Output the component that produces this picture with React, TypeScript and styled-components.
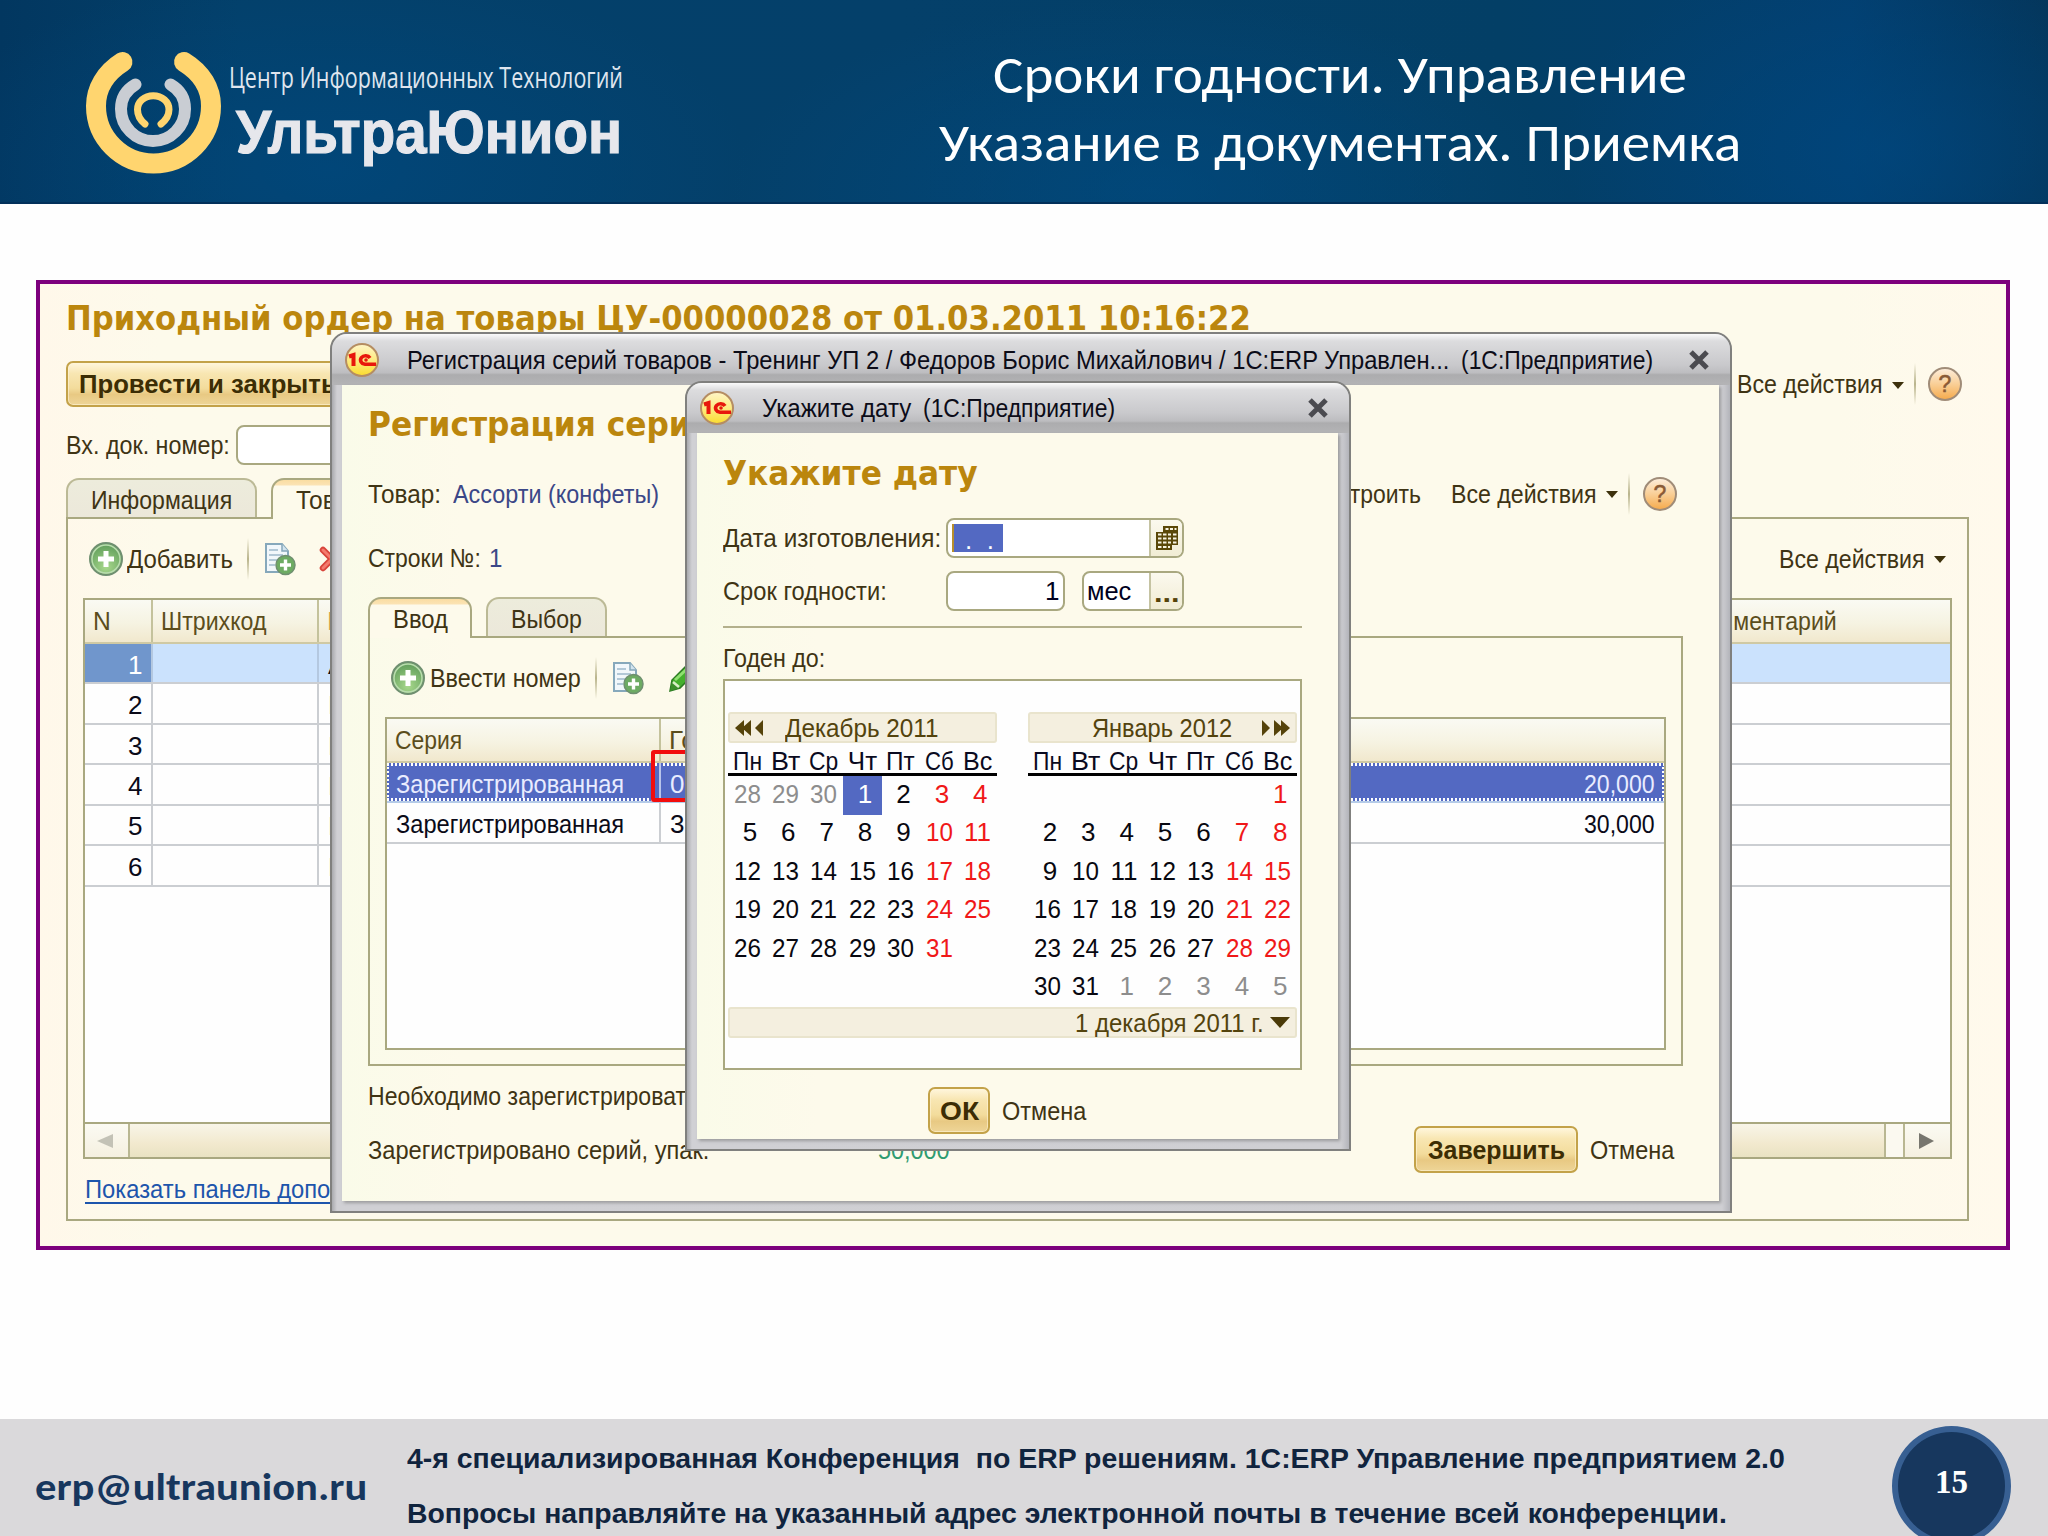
import React, { useLayoutEffect, useRef, useState } from 'react';
import styled, { createGlobalStyle } from 'styled-components';

const Global = createGlobalStyle`
  *, *::before, *::after { box-sizing: border-box; }
  html, body { margin: 0; padding: 0; }
  body { width: 2048px; height: 1536px; overflow: hidden; background: #fefefe; }
`;

const OLIVE = '#a9a880';
const INK = '#3f3414';
const UI = '"Liberation Sans", Arial, sans-serif';
const HEAD = '"DejaVu Sans", Verdana, sans-serif';
const DISPLAY = 'Carlito, Calibri, Lato, "Open Sans", sans-serif';

/* ---------- text that is set to an exact measure ---------- */

const Measure = styled.span<{ $w: number }>`
  display: inline-block;
  flex: none;
  width: ${(p) => p.$w}px;
  white-space: pre;
  text-align: left;
`;
const MeasureInner = styled.span`
  display: inline-block;
  transform-origin: 0 50%;
`;

function Fit({ w, children }: { w: number; children: React.ReactNode }) {
  const ref = useRef<HTMLSpanElement>(null);
  const [scale, setScale] = useState(1);
  useLayoutEffect(() => {
    if (ref.current) setScale(w / ref.current.offsetWidth);
  }, [w, children]);
  return (
    <Measure $w={w}>
      <MeasureInner ref={ref} style={{ transform: `scaleX(${scale})` }}>
        {children}
      </MeasureInner>
    </Measure>
  );
}

/* ---------- slide ---------- */

const Slide = styled.div`
  width: 2048px;
  height: 1536px;
  display: flex;
  flex-direction: column;
  background: #fefefe;
  font-family: ${UI};
  overflow: hidden;
`;

const Header = styled.header`
  height: 204px;
  flex: none;
  display: flex;
  background:
    radial-gradient(ellipse 420px 190px at 1150px 190px, rgba(0, 76, 132, 0.6), transparent),
    radial-gradient(ellipse 330px 200px at 1890px 150px, rgba(0, 73, 130, 0.6), transparent),
    radial-gradient(ellipse 420px 200px at 330px 170px, rgba(0, 74, 130, 0.6), transparent),
    linear-gradient(90deg, #023760 0, #03406a 240px, #04406a 900px, #033f66 1500px, #023f70 1850px, #043559 2048px);
  border-bottom: 2px solid #02305a;
`;
const LogoSvg = styled.svg`
  flex: none;
  width: 640px;
  height: 201px;
  overflow: visible;
`;
const Titles = styled.div`
  display: flex;
  flex-direction: column;
  align-items: center;
  width: 1400px;
  padding-top: 41px;
  color: #fff;
  font: 400 53px/68px ${DISPLAY};
`;

const Stage = styled.main`
  flex: 1;
  padding: 76px 38px 0 36px;
`;

const Frame = styled.section`
  position: relative;
  width: 1974px;
  height: 970px;
  border: 4px solid #7d007d;
  background: linear-gradient(90deg, #fff8ea 0, #fdfaeb 120px, #fdfaeb 1800px, #fff9ec 100%);
  padding-left: 26px;
  color: ${INK};
  font-size: 26px;
  line-height: 32px;
`;

const Heading = styled.h2<{ $h: number; $pt?: number }>`
  margin: 0;
  height: ${(p) => p.$h}px;
  padding-top: ${(p) => p.$pt ?? 0}px;
  display: flex;
  align-items: center;
  font: 700 33px/40px ${HEAD};
  color: #bb860d;
`;

const Row = styled.div<{ $h: number; $mt?: number; $gap?: number }>`
  display: flex;
  align-items: center;
  height: ${(p) => p.$h}px;
  margin-top: ${(p) => p.$mt ?? 0}px;
  gap: ${(p) => p.$gap ?? 0}px;
`;
const Grow = styled.div`
  flex: 1;
`;
const Gap = styled.div<{ $w: number }>`
  flex: none;
  width: ${(p) => p.$w}px;
`;
const Value = styled.span<{ $c?: string }>`
  color: ${(p) => p.$c ?? '#3b4787'};
`;
const Ellipsis = styled.span`
  padding-top: 3px;
  color: #55430a;
  font-weight: 700;
`;

const GoldButton = styled.button<{ $w: number; $h?: number; $pl?: number }>`
  flex: none;
  width: ${(p) => p.$w}px;
  height: ${(p) => p.$h ?? 47}px;
  padding: 0 0 0 ${(p) => p.$pl ?? 12}px;
  text-align: left;
  border: 2px solid #c3a249;
  border-radius: 7px;
  background: linear-gradient(#fff6dc 0, #f8e6b2 25%, #f3dc9c 60%, #e8c983 75%, #eed597 100%);
  box-shadow: inset 0 0 0 1px rgba(255, 245, 215, 0.6);
  font: 700 26px/32px ${UI};
  color: #3c2d04;
`;

const Separator = styled.i`
  flex: none;
  width: 2px;
  height: 42px;
  background: linear-gradient(transparent, #b9b48c, transparent);
`;
const Caret = styled.i`
  flex: none;
  margin-top: 2px;
  border: 6px solid transparent;
  border-top: 7px solid #3d310c;
  border-bottom: 0;
`;

const Field = styled.div<{ $w: number }>`
  flex: none;
  display: flex;
  align-items: center;
  width: ${(p) => p.$w}px;
  height: 40px;
  border: 2px solid ${OLIVE};
  border-radius: 8px;
  background: #fff;
  overflow: hidden;
  color: #000020;
`;
const FieldButton = styled.div`
  width: 33px;
  height: 100%;
  border-left: 2px solid #c5c3a2;
  background: linear-gradient(#fbf9ee, #f1ecd4);
  display: flex;
  align-items: center;
  justify-content: center;
`;
const Selection = styled.span`
  display: flex;
  align-items: center;
  margin-left: 4px;
  width: 51px;
  height: 28px;
  padding: 4px 0 0 11px;
  background: #5369c2;
  border-left: 2px solid #b78f2c;
  color: #fff;
  white-space: pre;
  line-height: 20px;
`;

const Tabs = styled.div<{ $mt: number }>`
  display: flex;
  gap: 14px;
  margin-top: ${(p) => p.$mt}px;
  height: 39px;
`;
const Tab = styled.div<{ $w: number; $on?: boolean }>`
  position: relative;
  z-index: 1;
  display: flex;
  align-items: center;
  padding-left: 23px;
  width: ${(p) => p.$w}px;
  height: ${(p) => (p.$on ? 41 : 39)}px;
  padding-top: ${(p) => (p.$on ? 0 : 2)}px;
  border: 2px solid ${(p) => (p.$on ? OLIVE : '#bbb995')};
  border-bottom: 0;
  border-radius: 13px 13px 0 0;
  background: ${(p) =>
    p.$on ? 'linear-gradient(#fadda2 0, #fbe3b4 5px, #fdfaeb 6px)' : 'linear-gradient(#edecdc, #ece8da)'};
`;
const Panel = styled.div<{ $w: number; $h: number }>`
  width: ${(p) => p.$w}px;
  height: ${(p) => p.$h}px;
  border: 2px solid ${OLIVE};
  padding: 0 15px;
`;

/* ---------- tables ---------- */

const Grid = styled.div<{ $h: number }>`
  display: flex;
  flex-direction: column;
  height: ${(p) => p.$h}px;
  border: 2px solid ${OLIVE};
  background: #fefefe;
  color: #0a0a18;
`;
const GridHead = styled.div<{ $cols: string }>`
  display: grid;
  grid-template-columns: ${(p) => p.$cols};
  height: 44px;
  flex: none;
  background: linear-gradient(#fafaf3, #f6f3e2 55%, #f1e8cd);
  border-bottom: 2px solid #cfc9a4;
  color: #5b4d1c;
`;
const Cell = styled.div<{ $pl?: number; $end?: boolean; $bg?: string; $c?: string; $line?: string }>`
  display: flex;
  align-items: center;
  min-width: 0;
  overflow: hidden;
  padding-left: ${(p) => p.$pl ?? 0}px;
  padding-right: ${(p) => (p.$end ? 9 : 0)}px;
  justify-content: ${(p) => (p.$end ? 'flex-end' : 'flex-start')};
  background: ${(p) => p.$bg ?? 'transparent'};
  color: ${(p) => p.$c ?? 'inherit'};
  border-right: ${(p) => (p.$line ? `2px solid ${p.$line}` : '0')};
`;
const GridRow = styled.div<{ $cols: string; $active?: boolean }>`
  display: grid;
  grid-template-columns: ${(p) => p.$cols};
  height: 40.45px;
  flex: none;
  background: ${(p) => (p.$active ? '#cbe2fd' : '#fefefe')};
  border-bottom: 2px solid #cbced2;
  ${Cell} {
    padding-top: 3px;
  }
`;
const DottedRow = styled(GridRow)`
  color: #e9ecff;
  border-bottom-color: #b5cbe8;
  background:
    repeating-linear-gradient(90deg, #fff 0 2px, #5369c2 2px 4px) 0 0 / 100% 3px no-repeat,
    repeating-linear-gradient(90deg, #fff 0 2px, #5369c2 2px 4px) 0 100% / 100% 3px no-repeat,
    repeating-linear-gradient(#fff 0 2px, #5369c2 2px 4px) 0 0 / 2px 100% no-repeat,
    repeating-linear-gradient(#fff 0 2px, #5369c2 2px 4px) 100% 0 / 2px 100% no-repeat,
    #5369c2;
`;
const RedMark = styled.div`
  position: absolute;
  left: 266px;
  top: 33px;
  width: 60px;
  height: 52px;
  border: 4px solid #f20d0d;
  border-radius: 3px;
`;
const Relative = styled.div`
  position: relative;
`;

const Scrollbar = styled.div`
  margin-top: auto;
  height: 35px;
  display: grid;
  grid-template-columns: 43px 1758px 1fr 45px;
  border-top: 2px solid ${OLIVE};
  background: #fbf9f0;
`;
const ScrollButton = styled.div`
  display: flex;
  align-items: center;
  justify-content: center;
  padding-right: 4px;
  background: linear-gradient(#fbfaf2, #f5f0e0);
`;
const Thumb = styled.div`
  border: solid #b9b792;
  border-width: 0 2px;
  background: linear-gradient(#f8f5e8, #f2e9ce 60%, #e9e2c2);
`;
const Track = styled.div`
  border-right: 2px solid #b9b792;
`;
const Link = styled.span`
  color: #1d55ac;
  border-bottom: 2px solid #1d55ac;
  height: 31px;
  line-height: 32px;
`;

/* ---------- floating windows ---------- */

const Win = styled.section<{ $x: number; $y: number; $w: number; $h: number }>`
  position: absolute;
  z-index: 3;
  left: ${(p) => p.$x}px;
  top: ${(p) => p.$y}px;
  width: ${(p) => p.$w}px;
  height: ${(p) => p.$h}px;
  border: 2px solid #80807e;
  border-radius: 17px 17px 0 0;
  background: linear-gradient(90deg, #a9aaae 0, #d0d0d4 5px, #cfcfd3 calc(100% - 8px), #b3b4ba 100%);
  padding: 0 11px 10px 10px;
  display: flex;
  flex-direction: column;
`;
const TitleBar = styled.div<{ $h: number }>`
  height: ${(p) => p.$h}px;
  flex: none;
  margin: 0 -11px 0 -10px;
  padding: 0 20px 0 12px;
  border-radius: 15px 15px 0 0;
  background: linear-gradient(#fafafa 0, #dcdcde 14%, #c9c9cc 60%, #bdbdc0 76%, #acacae 80%, #b4b4b6 100%);
  display: flex;
  align-items: center;
  color: #0c0c18;
`;
const Body = styled.div`
  flex: 1;
  padding-left: 26px;
  background: linear-gradient(90deg, #fafbe9 0, #fdfaeb 120px, #fdfaeb 100%);
  box-shadow: 2px 2px 3px rgba(90, 90, 90, 0.45);
`;

/* ---------- calendar ---------- */

const Divider = styled.div`
  margin-top: 15px;
  width: 579px;
  height: 2px;
  background: #b3b08c;
`;
const Calendar = styled.div`
  width: 579px;
  height: 391px;
  border: 2px solid ${OLIVE};
  background: #fefefe;
  padding: 31px 3px 0;
`;
const Months = styled.div`
  display: flex;
  justify-content: space-between;
`;
const Month = styled.div`
  width: 269px;
`;
const MonthBar = styled.div<{ $next?: boolean }>`
  display: flex;
  align-items: center;
  height: 31px;
  padding: 0 ${(p) => (p.$next ? 4 : 0)}px 0 ${(p) => (p.$next ? 62 : 5)}px;
  gap: ${(p) => (p.$next ? 29 : 21)}px;
  background: #f4efdf;
  border: 2px solid #e9e4cd;
  border-radius: 3px;
  color: #53430d;
`;
const Week = styled.div`
  display: grid;
  grid-template-columns: repeat(7, 38.4px);
  height: 33px;
  align-items: center;
  justify-items: center;
  padding-top: 2px;
  border-bottom: 3px solid #000;
  color: #0a0a20;
`;
const Days = styled.div`
  display: grid;
  grid-template-columns: repeat(7, 38.4px);
  grid-auto-rows: 38.5px;
`;
const Day = styled.div<{ $kind: string; $one: boolean }>`
  display: flex;
  align-items: center;
  justify-content: center;
  padding: 0 0 3px ${(p) => (p.$one ? 5 : 0)}px;
  color: ${(p) => ({ dim: '#8d8d8d', red: '#f01818', sel: '#fff', day: '#080810' })[p.$kind]};
  background: ${(p) => (p.$kind === 'sel' ? '#5369c2' : 'transparent')};
`;
const TodayBar = styled.div`
  display: flex;
  align-items: center;
  justify-content: flex-end;
  gap: 6px;
  height: 31px;
  padding-right: 5px;
  background: #f4efdf;
  border: 2px solid #e9e4cd;
  border-radius: 3px;
  color: #53430d;
`;
const BigCaret = styled.i`
  border: 10px solid transparent;
  border-top: 11px solid #4a3a08;
  border-bottom: 0;
`;
const Actions = styled.div`
  display: flex;
  align-items: center;
  gap: 12px;
  margin-top: 17px;
  padding-left: 205px;
`;

/* ---------- footer ---------- */

const Footer = styled.footer`
  position: relative;
  flex: none;
  height: 117px;
  display: flex;
  background: #dad9db;
`;
const Mail = styled.div`
  width: 407px;
  padding: 43px 0 0 35px;
  color: #17375e;
  font: 700 39px/50px ${DISPLAY};
`;
const Notes = styled.div`
  display: flex;
  flex-direction: column;
  padding-top: 12px;
  color: #10243e;
  font: 700 28px/55px ${UI};
`;
const PageNo = styled.div`
  position: absolute;
  left: 1892px;
  top: 7px;
  width: 119px;
  height: 120px;
  border-radius: 50%;
  border: 6px solid #375f92;
  background: #17375e;
  color: #fff;
  text-align: center;
  font: 700 33px/101px "Liberation Serif", serif;
`;

/* ---------- drawings ---------- */

const Icon = styled.svg`
  flex: none;
  display: block;
`;

const PlusIcon = () => (
  <Icon width="34" height="34" viewBox="0 0 34 34">
    <defs>
      <radialGradient id="plus" cx="50%" cy="75%" r="75%">
        <stop offset="0" stopColor="#a8d88c" />
        <stop offset="1" stopColor="#5c9a58" />
      </radialGradient>
    </defs>
    <circle cx="17" cy="17" r="16" fill="url(#plus)" stroke="#6f8f70" strokeWidth="2" />
    <circle cx="17" cy="17" r="14" fill="none" stroke="#b9dcae" strokeWidth="1.5" />
    <path d="M17 9v16M9 17h16" stroke="#fff" strokeWidth="5" />
  </Icon>
);
const CopyIcon = () => (
  <Icon width="33" height="34" viewBox="0 0 33 34">
    <path d="M2 2h16l6 7v21H2z" fill="#f1f7fb" stroke="#86a8bb" strokeWidth="2" />
    <path d="M18 2v7h6" fill="#d3e4ee" stroke="#86a8bb" strokeWidth="1.5" />
    <path d="M5 8h9M5 13h14M5 18h9M5 23h6" stroke="#9db9cb" strokeWidth="1.6" />
    <circle cx="21.5" cy="23" r="9.5" fill="#6dab63" stroke="#6f8f70" strokeWidth="1.5" />
    <path d="M21.5 17.5v11M16 23h11" stroke="#fff" strokeWidth="3.4" />
  </Icon>
);
const CrossIcon = () => (
  <Icon width="26" height="26" viewBox="0 0 26 26">
    <path d="M4 4l18 18M22 4L4 22" stroke="#d8433a" strokeWidth="6.5" strokeLinecap="round" />
    <path d="M4 4l18 18M22 4L4 22" stroke="#f47b6e" strokeWidth="3" strokeLinecap="round" />
  </Icon>
);
const PencilIcon = () => (
  <Icon width="30" height="30" viewBox="0 0 30 30">
    <path d="M2 28l2-11L19 2l8 8L12 25z" fill="#45b02d" stroke="#2c7a22" strokeWidth="1.5" />
    <path d="M7 17L20 5" stroke="#8fe070" strokeWidth="3" />
    <path d="M2 28l2-10 8 7z" fill="#3c8f2c" />
    <path d="M5 19l6 5" stroke="#d9f0c8" strokeWidth="2.5" />
  </Icon>
);
const HelpIcon = () => (
  <Icon width="36" height="36" viewBox="0 0 36 36">
    <defs>
      <linearGradient id="help" x1="0" y1="0" x2="0" y2="1">
        <stop offset="0" stopColor="#fdeedd" />
        <stop offset=".5" stopColor="#f9cf97" />
        <stop offset="1" stopColor="#f5a94a" />
      </linearGradient>
    </defs>
    <circle cx="18" cy="18" r="16" fill="url(#help)" stroke="#a08c78" strokeWidth="2" />
    <text x="18" y="26" textAnchor="middle" fontFamily="Liberation Sans" fontSize="23" stroke="#8a5a36" strokeWidth=".5" fill="#8a5a36">
      ?
    </text>
  </Icon>
);
const OneCIcon = () => (
  <Icon width="36" height="36" viewBox="0 0 36 36">
    <defs>
      <linearGradient id="onec" x1="0" y1="0" x2="0" y2="1">
        <stop offset="0" stopColor="#fff6c8" />
        <stop offset=".6" stopColor="#fde873" />
        <stop offset="1" stopColor="#fbdc2c" />
      </linearGradient>
    </defs>
    <circle cx="18" cy="18" r="16" fill="url(#onec)" stroke="#b58d62" strokeWidth="2" />
    <path d="M5 14.500l4.500-1.500v11" fill="none" stroke="#e8170c" strokeWidth="4" />
    <path d="M26 16a5 4.300 0 1 0-5 6.300H32" fill="none" stroke="#e8170c" strokeWidth="3.600" />
    <circle cx="22" cy="18" r="1.800" fill="#e8170c" />
  </Icon>
);
const CloseIcon = () => (
  <Icon width="22" height="22" viewBox="0 0 22 22">
    <path d="M3 3l16 16M19 3L3 19" stroke="#4b4b50" strokeWidth="5" />
  </Icon>
);
const SheetIcon = () => (
  <Icon width="24" height="26" viewBox="0 0 24 26">
    <path d="M8 1h15v19h-6v5H1V7h7z" fill="#5a4708" />
    <path
      d="M10.5 4h3M15 4h3M19.500 4h2M3 9.500h3.500M8 9.500h3.500M13 9.500h3M18 9.500h3.500M3 13.500h3.500M8 13.500h3.500M13 13.500h3M18 13.500h3.500M3 17.500h3.500M8 17.500h3.500M13 17.500h3M18 17.500h3.500M3 22h3.500M8 22h3.500M13 22h2"
      stroke="#f8f4e2"
      strokeWidth="2"
    />
  </Icon>
);
const PrevArrows = () => (
  <Icon width="29" height="16" viewBox="0 0 29 16">
    <path d="M9 0v16L0 8zM16 0v16L7 8zM28 0v16L20 8z" fill="#55430a" />
  </Icon>
);
const NextArrows = () => (
  <Icon width="29" height="16" viewBox="0 0 29 16">
    <path d="M20 0v16l9-8zM13 0v16l9-8zM1 0v16l8-8z" fill="#55430a" />
  </Icon>
);
const ScrollArrow = ({ left }: { left?: boolean }) => (
  <Icon width="16" height="16" viewBox="0 0 16 16">
    <path d={left ? 'M16 1v14L0 8z' : 'M1 0v16l15-8z'} fill={left ? '#c3c2b6' : '#77766e'} />
  </Icon>
);

const Logo = () => (
  <LogoSvg viewBox="0 0 640 201">
    <g fill="none" strokeLinecap="round">
      <path
        d="M122.500 62C105 73 96 89 96 106A57.500 57.500 0 0 0 211 106C211 89 202 73 184 62"
        stroke="#ffd56f"
        strokeWidth="20"
      />
      <path d="M135.500 84.500C126 90 121 99 121 109A32 32 0 0 0 185 109C185 99 180 90 170.500 84.500" stroke="#c9cdd3" strokeWidth="12" />
      <path d="M145 124C140 120 137.500 115 137.500 109.500A15.700 13.800 0 0 1 169 109.500C169 115 166 120 161 124" stroke="#ffd56f" strokeWidth="7" />
    </g>
    <text x="229" y="88" textLength="394" lengthAdjust="spacingAndGlyphs" fontFamily="Open Sans, Noto Sans" fontSize="30" fill="#dfe5ee">
      Центр Информационных Технологий
    </text>
    <text x="236" y="152.500" textLength="386" lengthAdjust="spacingAndGlyphs" fontFamily="Liberation Sans" fontWeight="700" fontSize="62" fill="#e6e7ec" stroke="#e6e7ec" strokeWidth="1.2">
      УльтраЮнион
    </text>
  </LogoSvg>
);

/* ---------- content ---------- */

const AllActions = () => (
  <>
    <Fit w={146}>Все действия</Fit>
    <Gap $w={9} />
    <Caret />
  </>
);

const WEEK = ['Пн', 'Вт', 'Ср', 'Чт', 'Пт', 'Сб', 'Вс'];

const DayGrid = ({ lead, count, before, after, selected }: {
  lead: number; count: number; before?: number[]; after?: number; selected?: number;
}) => {
  const cells: { n: number | null; kind: string }[] = [];
  for (let i = 0; i < lead; i++) cells.push({ n: before ? before[i] : null, kind: 'dim' });
  for (let d = 1; d <= count; d++) {
    const col = (lead + d - 1) % 7;
    cells.push({ n: d, kind: d === selected ? 'sel' : col > 4 ? 'red' : 'day' });
  }
  for (let d = 1; d <= (after ?? 0); d++) cells.push({ n: d, kind: 'dim' });
  return (
    <Days>
      {cells.map((c, i) => (
        <Day key={i} $kind={c.kind} $one={c.n !== null && c.n < 10}>
          {c.n !== null && <Fit w={c.n < 10 ? 14 : 27}>{c.n}</Fit>}
        </Day>
      ))}
    </Days>
  );
};

const WeekHeader = () => (
  <Week>
    {WEEK.map((d) => (
      <Fit key={d} w={29}>{d}</Fit>
    ))}
  </Week>
);

const MAIN_COLS = '68px 166px 1372px 1fr';
const SERIES_COLS = '274px 1fr 120px';

export default function App() {
  return (
    <>
      <Global />
      <Slide>
        <Header>
          <Logo />
          <Titles>
            <Fit w={694}>Сроки годности. Управление</Fit>
            <Fit w={802}>Указание в документах. Приемка</Fit>
          </Titles>
        </Header>

        <Stage>
          <Frame>
            <Heading $h={70}>
              <Fit w={1185}>Приходный ордер на товары ЦУ-00000028 от 01.03.2011 10:16:22</Fit>
            </Heading>
            <Row $h={46} $mt={7}>
              <GoldButton $w={300} $h={46} $pl={11}>
                <Fit w={258}>Провести и закрыть</Fit>
              </GoldButton>
              <Grow />
              <AllActions />
              <Gap $w={10} />
              <Separator />
              <Gap $w={11} />
              <HelpIcon />
              <Gap $w={43} />
            </Row>
            <Row $h={40} $mt={18}>
              <Fit w={164}>Вх. док. номер:</Fit>
              <Gap $w={6} />
              <Field $w={180} />
            </Row>
            <Tabs $mt={13}>
              <Tab $w={191}>
                <Fit w={141}>Информация</Fit>
              </Tab>
              <Tab $w={140} $on>
                <Fit w={84}>Товары</Fit>
              </Tab>
            </Tabs>
            <Panel $w={1903} $h={704}>
              <Row $h={79}>
                <Gap $w={6} />
                <PlusIcon />
                <Gap $w={4} />
                <Fit w={106}>Добавить</Fit>
                <Gap $w={14} />
                <Separator />
                <Gap $w={15} />
                <CopyIcon />
                <Gap $w={22} />
                <CrossIcon />
                <Grow />
                <AllActions />
                <Gap $w={6} />
              </Row>
              <Grid $h={561}>
                <GridHead $cols={MAIN_COLS}>
                  <Cell $pl={8} $line="#c4c29c"><Fit w={18}>N</Fit></Cell>
                  <Cell $pl={8} $line="#c4c29c"><Fit w={105}>Штрихкод</Fit></Cell>
                  <Cell $pl={8} $c="#d9a64e">Н</Cell>
                  <Cell><Fit w={146}>Комментарий</Fit></Cell>
                </GridHead>
                {[1, 2, 3, 4, 5, 6].map((n) => (
                  <GridRow key={n} $cols={MAIN_COLS} $active={n === 1}>
                    <Cell
                      $end
                      $line={n === 1 ? '#b4c8e0' : '#cbced2'}
                      $bg={n === 1 ? '#7096cc' : undefined}
                      $c={n === 1 ? '#fff' : undefined}
                    >
                      <Fit w={14}>{n}</Fit>
                    </Cell>
                    <Cell $line={n === 1 ? '#b4c8e0' : '#cbced2'} />
                    <Cell $pl={9} $c={n === 1 ? undefined : '#e6bd78'}>{n === 1 ? 'А' : 'К'}</Cell>
                    <Cell />
                  </GridRow>
                ))}
                <Scrollbar>
                  <ScrollButton><ScrollArrow left /></ScrollButton>
                  <Thumb />
                  <Track />
                  <ScrollButton><ScrollArrow /></ScrollButton>
                </Scrollbar>
              </Grid>
              <Row $h={59}>
                <Gap $w={2} />
                <Link><Fit w={245}>Показать панель допо</Fit></Link>
              </Row>
            </Panel>

            <Win $x={290} $y={48} $w={1402} $h={881}>
              <TitleBar $h={51}>
                <OneCIcon />
                <Gap $w={27} />
                <Fit w={1042}>Регистрация серий товаров - Тренинг УП 2 / Федоров Борис Михайлович / 1С:ERP Управлен...</Fit>
                <Gap $w={12} />
                <Fit w={192}>(1С:Предприятие)</Fit>
                <Grow />
                <CloseIcon />
              </TitleBar>
              <Body>
                <Heading $h={78} $pt={2}>
                  <Fit w={345}>Регистрация серий</Fit>
                </Heading>
                <Row $h={61}>
                  <Fit w={73}>Товар:</Fit>
                  <Gap $w={12} />
                  <Value><Fit w={206}>Ассорти (конфеты)</Fit></Value>
                  <Grow />
                  <Fit w={112}>Настроить</Fit>
                  <Gap $w={30} />
                  <AllActions />
                  <Gap $w={10} />
                  <Separator />
                  <Gap $w={12} />
                  <HelpIcon />
                  <Gap $w={41} />
                </Row>
                <Row $h={67}>
                  <Fit w={113}>Строки №:</Fit>
                  <Gap $w={8} />
                  <Value><Fit w={13}>1</Fit></Value>
                </Row>
                <Tabs $mt={6}>
                  <Tab $w={104} $on><Fit w={55}>Ввод</Fit></Tab>
                  <Tab $w={121}><Fit w={71}>Выбор</Fit></Tab>
                </Tabs>
                <Panel $w={1315} $h={430}>
                  <Row $h={79}>
                    <Gap $w={6} />
                    <PlusIcon />
                    <Gap $w={5} />
                    <Fit w={151}>Ввести номер</Fit>
                    <Gap $w={14} />
                    <Separator />
                    <Gap $w={15} />
                    <CopyIcon />
                    <Gap $w={23} />
                    <PencilIcon />
                  </Row>
                  <Relative>
                    <Grid $h={333}>
                      <GridHead $cols={SERIES_COLS}>
                        <Cell $pl={8} $line="#c4c29c"><Fit w={67}>Серия</Fit></Cell>
                        <Cell $pl={8}>Го</Cell>
                        <Cell />
                      </GridHead>
                      <DottedRow $cols={SERIES_COLS}>
                        <Cell $pl={9} $line="#b9c4ea"><Fit w={228}>Зарегистрированная</Fit></Cell>
                        <Cell $pl={9}>01</Cell>
                        <Cell $end><Fit w={71}>20,000</Fit></Cell>
                      </DottedRow>
                      <GridRow $cols={SERIES_COLS}>
                        <Cell $pl={9} $line="#cbced2"><Fit w={228}>Зарегистрированная</Fit></Cell>
                        <Cell $pl={9}>31</Cell>
                        <Cell $end><Fit w={71}>30,000</Fit></Cell>
                      </GridRow>
                    </Grid>
                    <RedMark />
                  </Relative>
                </Panel>
                <Row $h={60}>
                  <Fit w={318}>Необходимо зарегистрироват</Fit>
                </Row>
                <Row $h={47}>
                  <Fit w={341}>Зарегистрировано серий, упак.</Fit>
                  <Gap $w={169} />
                  <Value $c="#2f9c70"><Fit w={72}>50,000</Fit></Value>
                  <Grow />
                  <GoldButton $w={164}><Fit w={137}>Завершить</Fit></GoldButton>
                  <Gap $w={12} />
                  <Fit w={84}>Отмена</Fit>
                  <Gap $w={45} />
                </Row>
              </Body>
            </Win>

            <Win $x={645} $y={97} $w={666} $h={770}>
              <TitleBar $h={50}>
                <OneCIcon />
                <Gap $w={27} />
                <Fit w={149}>Укажите дату</Fit>
                <Gap $w={12} />
                <Fit w={192}>(1С:Предприятие)</Fit>
                <Grow />
                <CloseIcon />
              </TitleBar>
              <Body>
                <Heading $h={79} $pt={3}>
                  <Fit w={255}>Укажите дату</Fit>
                </Heading>
                <Row $h={40} $mt={6}>
                  <Fit w={218}>Дата изготовления:</Fit>
                  <Gap $w={5} />
                  <Field $w={238}>
                    <Selection>{'.  .'}</Selection>
                    <Grow />
                    <FieldButton><SheetIcon /></FieldButton>
                  </Field>
                </Row>
                <Row $h={40} $mt={13}>
                  <Fit w={164}>Срок годности:</Fit>
                  <Gap $w={59} />
                  <Field $w={119}>
                    <Grow />
                    <Fit w={14}>1</Fit>
                    <Gap $w={4} />
                  </Field>
                  <Gap $w={17} />
                  <Field $w={102}>
                    <Gap $w={3} />
                    <Fit w={44}>мес</Fit>
                    <Grow />
                    <FieldButton><Ellipsis><Fit w={26}>...</Fit></Ellipsis></FieldButton>
                  </Field>
                </Row>
                <Divider />
                <Row $h={43} $mt={8}>
                  <Fit w={102}>Годен до:</Fit>
                </Row>
                <Calendar>
                  <Months>
                    <Month>
                      <MonthBar>
                        <PrevArrows />
                        <Fit w={154}>Декабрь 2011</Fit>
                      </MonthBar>
                      <WeekHeader />
                      <DayGrid lead={3} before={[28, 29, 30]} count={31} selected={1} />
                    </Month>
                    <Month>
                      <MonthBar $next>
                        <Fit w={140}>Январь 2012</Fit>
                        <NextArrows />
                      </MonthBar>
                      <WeekHeader />
                      <DayGrid lead={6} count={31} after={5} />
                    </Month>
                  </Months>
                  <TodayBar>
                    <Fit w={189}>1 декабря 2011 г.</Fit>
                    <BigCaret />
                  </TodayBar>
                </Calendar>
                <Actions>
                  <GoldButton $w={62} $pl={10}><Fit w={39}>ОК</Fit></GoldButton>
                  <Fit w={84}>Отмена</Fit>
                </Actions>
              </Body>
            </Win>
          </Frame>
        </Stage>

        <Footer>
          <Mail><Fit w={332}>erp@ultraunion.ru</Fit></Mail>
          <Notes>
            <Fit w={1378}>{'4-я специализированная Конференция  по ERP решениям. 1С:ERP Управление предприятием 2.0'}</Fit>
            <Fit w={1320}>Вопросы направляйте на указанный адрес электронной почты в течение всей конференции.</Fit>
          </Notes>
          <PageNo>15</PageNo>
        </Footer>
      </Slide>
    </>
  );
}
